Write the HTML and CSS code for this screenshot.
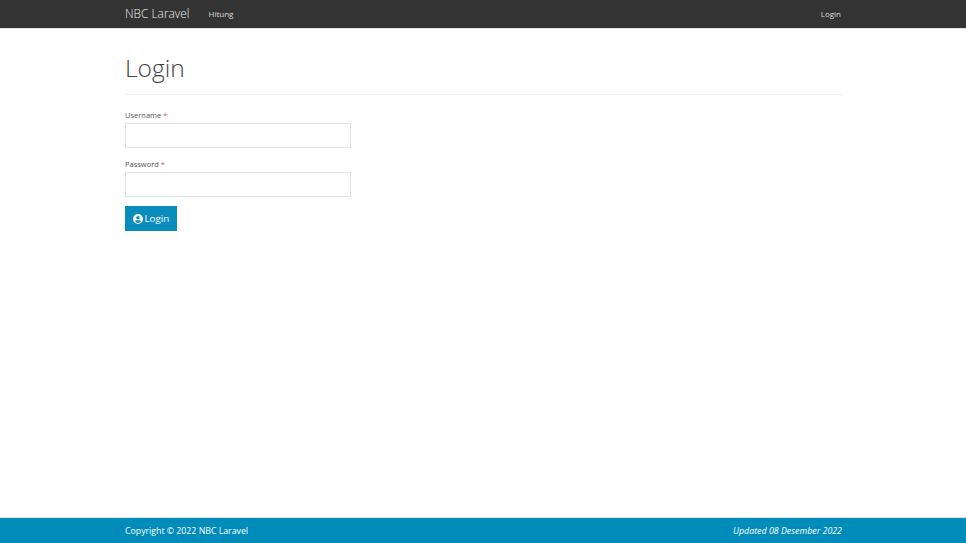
FILE: index.html
```html
<!DOCTYPE html>
<html lang="en">
<head>
  <meta charset="UTF-8" />
  <meta name="viewport" content="width=device-width, initial-scale=1.0" />
  <title>Login</title>
  <link rel="stylesheet" href="styles.css">
</head>
<body>
  <nav class="navbar">
    <div class="container navbar-inner">
      <a class="brand" href="#">NBC Laravel</a>
      <a class="nav-link nav-first" href="#">Hitung</a>
      <a class="nav-link nav-right" href="#">Login</a>
    </div>
  </nav>

  <main class="container content">
    <div class="page-header">
      <h1>Login</h1>
    </div>
    <form class="login-form">
      <div class="form-group">
        <label for="username">Username <span class="required">*</span></label>
        <input type="text" id="username" name="username" />
      </div>
      <div class="form-group">
        <label for="password">Password <span class="required">*</span></label>
        <input type="password" id="password" name="password" />
      </div>
      <button type="submit" class="btn">
        <svg class="btn-icon" viewBox="0 0 16 16" aria-hidden="true">
          <path fill-rule="evenodd" d="M8 0a8 8 0 1 0 0 16A8 8 0 0 0 8 0zm0 3a2.8 2.8 0 1 1 0 5.6A2.8 2.8 0 0 1 8 3zm0 11.2a6.2 6.2 0 0 1-4.7-2.2c.5-1.300 1.800-2.100 3.200-2.100.3 0 .8.300 1.500.300s1.200-.300 1.500-.300c1.400 0 2.700.800 3.200 2.100A6.200 6.200 0 0 1 8 14.200z"/>
        </svg>
        Login
      </button>
    </form>
  </main>

  <footer class="footer">
    <div class="container footer-inner">
      <span>Copyright © 2022 NBC Laravel</span>
      <em class="updated">Updated 08 Desember 2022</em>
    </div>
  </footer>
</body>
</html>
```

FILE: styles.css
```css
* { box-sizing: border-box; }
html, body { height: 100%; }
body { margin: 0; display: flex; flex-direction: column; min-height: 543px; font-family: "Open Sans", sans-serif; font-size: 8.75px; line-height: 1.43; color: #333; background: #fff; overflow: hidden; }
a { text-decoration: none; }
.container { width: 746px; margin: 0 auto; padding: 0 14px 0 15px; }
.navbar { height: 29px; background: #333; border-bottom: 1px solid #e4e4e4; flex: none; }
.navbar-inner { display: flex; align-items: center; height: 28px; }
.brand { font-size: 11.9px; font-weight: 300; color: #eee; }
.nav-link { font-size: 8px; color: #ddd; }
.nav-first { margin-left: 19px; }
.nav-right { margin-left: auto; margin-right: 1px; }
.content { flex: 1; width: 746px; }
.page-header { margin-top: 26px; height: 40px; border-bottom: 1px solid #eee; }
h1 { margin: 0; font-size: 24.6px; font-weight: 300; line-height: 25px; color: #444; }
.login-form { width: 226px; margin-top: 13px; }
.form-group { margin-bottom: 9px; }
label { display: block; height: 15px; line-height: 14px; font-size: 7.5px; color: #555; }
.required { color: #d9534f; }
input { display: block; width: 100%; height: 25px; padding: 4px 8px; border: 1px solid #e2e2e2; background: #fff; }
.btn { display: flex; align-items: center; gap: 1.5px; height: 25px; width: 52px; padding: 0 7px; border: 1px solid #0a8ab9; background: #0a8cbd; color: #fff; font-family: inherit; font-size: 9.8px; }
.btn-icon { width: 10px; height: 10px; fill: #fff; flex: none; }
.footer { height: 26px; background: #008cba; border-top: 1px solid #e4e4e4; flex: none; color: #fff; }
.footer-inner { display: flex; justify-content: space-between; align-items: center; height: 27px; }
.updated { font-size: 8.85px; }
```
